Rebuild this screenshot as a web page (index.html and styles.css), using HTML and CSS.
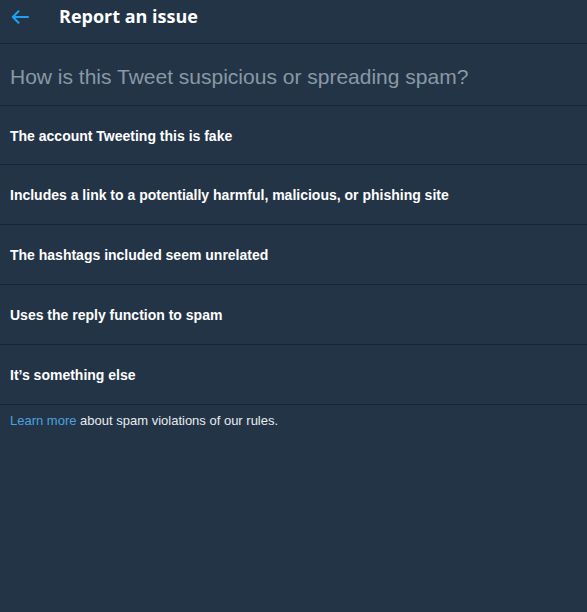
FILE: index.html
```html
<!DOCTYPE html>
<html>
<head>
<meta charset="utf-8">
<link rel="stylesheet" href="styles.css">
</head>
<body>
<div class="page">
  <header class="header">
    <span class="back">
      <svg width="18" height="14" viewBox="0 0 18 14"><path d="M17 7H2M7.5 1.2L1.8 7l5.7 5.8" fill="none" stroke="#1da1f2" stroke-width="2" stroke-linecap="round" stroke-linejoin="round"/></svg>
    </span>
    <h1 class="title">Report an issue</h1>
  </header>
  <div class="question">How is this Tweet suspicious or spreading spam?</div>
  <ul class="options">
    <li class="option">The account Tweeting this is fake</li>
    <li class="option">Includes a link to a potentially harmful, malicious, or phishing site</li>
    <li class="option">The hashtags included seem unrelated</li>
    <li class="option">Uses the reply function to spam</li>
    <li class="option">It’s something else</li>
  </ul>
  <p class="footer"><a class="link" href="#">Learn more</a> about spam violations of our rules.</p>
</div>
</body>
</html>
```
FILE: styles.css
```css
html, body {
  margin: 0;
  padding: 0;
  background: #243447;
}
.page {
  width: 587px;
  height: 612px;
  background: #243447;
  font-family: "Liberation Sans", Arial, sans-serif;
  color: #ffffff;
}
.header {
  display: flex;
  align-items: center;
  height: 32px;
  padding-bottom: 11px;
  border-bottom: 1px solid #1a2634;
}
.back {
  display: flex;
  width: 18px;
  margin-left: 11px;
  margin-right: 30px;
  padding-top: 1px;
}
.title {
  margin: 0;
  font-family: "Open Sans", "Noto Sans", sans-serif;
  font-weight: 700;
  font-size: 18px;
  color: #ffffff;
}
.question {
  height: 57px;
  display: flex;
  align-items: center;
  padding: 4px 10px 0;
  font-size: 21px;
  color: #8899a6;
  border-bottom: 1px solid #1a2634;
}
.options {
  list-style: none;
  margin: 0;
  padding: 0;
}
.option {
  height: 59px;
  display: flex;
  align-items: center;
  padding: 0 10px;
  font-size: 14px;
  font-weight: 700;
  border-bottom: 1px solid #1a2634;
}
.option:first-child {
  height: 57px;
  padding-top: 1px;
}
.footer {
  margin: 0;
  padding: 8px 10px;
  font-size: 13px;
  color: #e6ecf0;
}
.link {
  color: #4aa3df;
  text-decoration: none;
}
```
